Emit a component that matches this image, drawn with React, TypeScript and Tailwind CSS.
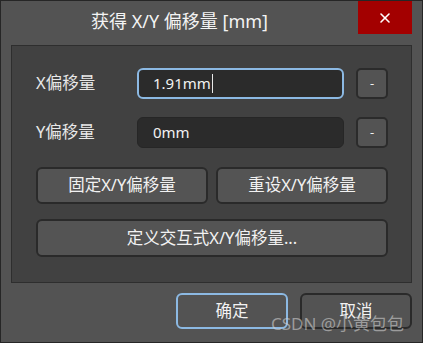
import { X } from 'lucide-react'

const FONT = "font-['Segoe_UI','Noto_Sans','Noto_Sans_CJK_SC',sans-serif]"

function SmallButton() {
  return (
    <button
      type="button"
      className="w-[32px] h-[31px] shrink-0 rounded-[5px] bg-[#535353] border-2 border-[#2b2b2b] flex items-center justify-center text-[#f0f0f0] text-[13px] leading-none"
    >
      -
    </button>
  )
}

function PanelButton({ label, className = '' }: { label: string; className?: string }) {
  return (
    <button
      type="button"
      className={`rounded-[6px] bg-[#545454] border-2 border-[#2a2a2a] text-[#f2f2f2] text-[16.5px] leading-none flex items-center justify-center ${className}`}
    >
      {label}
    </button>
  )
}

export default function App() {
  return (
    <div className={`${FONT} relative w-[423px] h-[343px] bg-[#535353] border border-[#262626] flex flex-col`}>
      {/* title bar */}
      <div className="h-[44px] flex items-start shrink-0">
        <div className="flex-1 h-full flex items-center justify-center text-[#f4f4f4] text-[18px] pb-[3px]">
          获得 X/Y 偏移量 [mm]
        </div>
        <button
          type="button"
          className="w-[54px] h-[33px] bg-[#a30000] flex items-center justify-center mr-[10px]"
        >
          <X size={16} strokeWidth={2.4} className="text-white" />
        </button>
      </div>

      {/* main panel */}
      <div className="mx-[10px] h-[238px] bg-[#414141] border border-[#2e2e2e] pt-[22px] pl-[24px] pr-[23px] flex flex-col">
        <div className="flex items-center h-[31px]">
          <span className="w-[101px] text-[#e8e8e8] text-[16.5px]">X偏移量</span>
          <div className="w-[207px] h-[31px] rounded-[6px] bg-[#2b2b2b] border-2 border-[#8cb9e3] flex items-center pl-[14px] text-[#f2f2f2] text-[15px]">
            1.91mm
            <span className="w-px h-[19px] bg-[#e8e8e8] ml-px" />
          </div>
          <div className="ml-[12px]">
            <SmallButton />
          </div>
        </div>

        <div className="flex items-center h-[31px] mt-[18px]">
          <span className="w-[101px] text-[#e8e8e8] text-[16.5px]">Y偏移量</span>
          <div className="w-[207px] h-[31px] rounded-[6px] bg-[#2b2b2b] border border-[#262626] flex items-center pl-[15px] text-[#f2f2f2] text-[15px]">
            0mm
          </div>
          <div className="ml-[12px]">
            <SmallButton />
          </div>
        </div>

        <div className="flex gap-[8px] mt-[19px]">
          <PanelButton label="固定X/Y偏移量" className="w-[172px] h-[37px]" />
          <PanelButton label="重设X/Y偏移量" className="w-[172px] h-[37px]" />
        </div>

        <PanelButton label="定义交互式X/Y偏移量..." className="w-[352px] h-[38px] mt-[15px]" />
      </div>

      {/* footer */}
      <div className="flex justify-end gap-[12px] pr-[10px] pt-[10px]">
        <button
          type="button"
          className="w-[112px] h-[36px] rounded-[6px] bg-[#535353] border-2 border-[#8cb9e3] text-[#f2f2f2] text-[16.5px]"
        >
          确定
        </button>
        <button
          type="button"
          className="w-[112px] h-[36px] rounded-[6px] bg-[#535353] border-2 border-[#2a2a2a] text-[#f2f2f2] text-[16.5px]"
        >
          取消
        </button>
      </div>

      {/* watermark */}
      <div className="absolute left-[270px] top-[314px] text-[17px] leading-none text-[#cfcfcf]/60 whitespace-nowrap pointer-events-none">
        CSDN @小黄包包
      </div>
    </div>
  )
}
